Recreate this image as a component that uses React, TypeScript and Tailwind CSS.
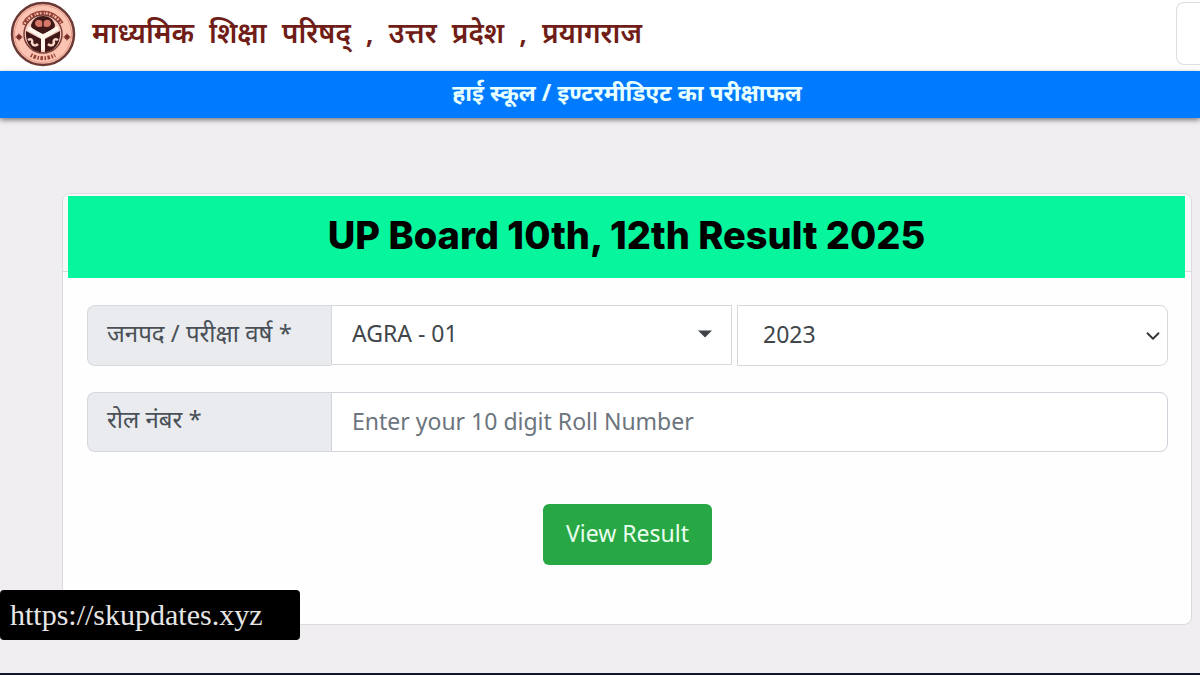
import { ChevronDown } from 'lucide-react'

const boardName = ['माध्यमिक', 'शिक्षा', 'परिषद्', ',', 'उत्तर', 'प्रदेश', ',', 'प्रयागराज']

export default function App() {
  return (
    <div className="relative flex min-h-screen flex-col overflow-hidden border-b-2 border-[#12162b] bg-[#f0eef1] font-['Noto_Sans',sans-serif] text-[#495057]">
      <Header />
      <main className="flex-1 pt-[75px] pr-2 pb-12 pl-[62px]">
        <ResultCard />
      </main>
      <a
        href="https://skupdates.xyz"
        className="absolute bottom-[33px] left-0 flex h-[50px] w-[300px] items-center rounded bg-black px-[10px] pb-[2px] font-['Liberation_Serif',serif] text-[30px] text-[#e6e6e6]"
      >
        https://skupdates.xyz
      </a>
    </div>
  )
}

function Header() {
  return (
    <header>
      <div className="flex h-[71px] items-center justify-between bg-[#fefffe] pb-1 pl-[10px]">
        <div className="flex items-center gap-4">
          <Emblem />
          <h1 className="flex gap-[15px] pb-1 text-[28px] font-semibold whitespace-nowrap text-[#701c17]">
            {boardName.map((word, i) => (
              <span key={i}>{word}</span>
            ))}
          </h1>
        </div>
        <button type="button" aria-label="Menu" className="h-[63px] w-6 rounded-l-lg border border-r-0 border-[#dcdfdd]" />
      </div>
      <div className="flex h-[47px] items-center justify-center bg-[#007bff] pb-1 pl-[54px] shadow-[0_2px_5px_rgba(0,0,0,0.5)]">
        <h2 className="text-[23px] font-bold text-[#e8ffff]">हाई स्कूल / इण्टरमीडिएट का परीक्षाफल</h2>
      </div>
    </header>
  )
}

function ResultCard() {
  return (
    <section className="rounded-lg border border-[#dcdadd] bg-[#fefefe]">
      <div className="h-[78px] rounded-t-lg border-b border-[#d5dbd9] bg-[#f5faf8] pt-[2px] pr-[6px] pl-[5px]">
        <h2 className="relative flex h-[82px] items-center justify-center bg-[#06f59d] pb-1 font-['Inter',sans-serif] text-[38px] font-extrabold text-black">
          UP Board 10th, 12th Result 2025
        </h2>
      </div>
      <form className="pt-[33px] pr-[23px] pb-[59px] pl-6" onSubmit={(e) => e.preventDefault()}>
        <div className="flex h-[61px]">
          <FieldLabel htmlFor="district">जनपद / परीक्षा वर्ष *</FieldLabel>
          <div className="relative w-[401px] shrink">
            <select id="district" className="h-[60px] w-full appearance-none border border-[#d5d9dd] bg-white px-5 pb-1 text-[23px] text-[#41464b]">
              <option>AGRA - 01</option>
            </select>
            <svg className="pointer-events-none absolute top-[25px] right-5" width="14" height="8" viewBox="0 0 14 8" fill="#3f4246">
              <path d="M0 0.5h14L7 7.5z" />
            </svg>
          </div>
          <div className="relative ml-[5px] flex-1">
            <select aria-label="परीक्षा वर्ष" className="h-full w-full appearance-none rounded-r-lg border border-[#d5d9dd] bg-white px-[25px] pb-[2px] text-[23px] text-[#41464b]">
              <option>2023</option>
            </select>
            <ChevronDown className="pointer-events-none absolute top-5 right-1 text-[#2f3337]" size={22} strokeWidth={2} />
          </div>
        </div>
        <div className="mt-[26px] flex h-[60px]">
          <FieldLabel htmlFor="roll">रोल नंबर *</FieldLabel>
          <input
            id="roll"
            type="text"
            placeholder="Enter your 10 digit Roll Number"
            className="min-w-0 flex-1 rounded-r-lg border border-[#ced4da] bg-white px-5 pb-[2px] text-[23px] placeholder:text-[#6c757d]"
          />
        </div>
        <div className="mt-[52px] flex justify-center">
          <button type="submit" className="h-[61px] w-[169px] rounded-md bg-[#28a745] pb-[2px] text-[23px] text-[#e9ffee]">
            View Result
          </button>
        </div>
      </form>
    </section>
  )
}

function FieldLabel({ htmlFor, children }: { htmlFor: string; children: string }) {
  return (
    <label
      htmlFor={htmlFor}
      className="flex w-[244px] shrink-0 items-center rounded-l-lg border border-r-0 border-[#d5d9dd] bg-[#e9ebee] pr-5 pb-[6px] pl-[19px] text-[24px] whitespace-nowrap"
    >
      {children}
    </label>
  )
}

function Emblem() {
  return (
    <svg width="66" height="66" viewBox="0 0 66 66" fill="none" role="img" aria-label="UP Board">
      <circle cx="33" cy="33" r="31" fill="#fbc4b2" stroke="#6b3a37" strokeWidth="2.5" />
      <circle cx="33" cy="33" r="28.500" stroke="#e79a89" strokeWidth="1" />
      {/* lettering band: top arc and shorter bottom arc */}
      <path d="M13 22A23 23 0 0 1 53 22" stroke="#a04a3f" strokeWidth="1.500" />
      <path d="M14 24A21 21 0 0 1 52 24" stroke="#963f35" strokeWidth="4" strokeDasharray="1.500 1.500 2.500 1 1 2" />
      <path d="M21 54A24 24 0 0 0 45 54" stroke="#963f35" strokeWidth="4" strokeDasharray="1.500 1.500 2.500 1.500" />
      <circle cx="33" cy="33" r="19" fill="#f9cdbf" stroke="#7c3d37" strokeWidth="1.500" />
      <path d="M21 24c2-6 6-9 12-9s10 3 12 9c0 2-1 4-3 5l-9 4-9-4c-2-1-3-3-3-5z" fill="#3f1817" />
      <path d="M25 22c1-4 5-4 8-1 3-3 7-3 8 1 0 4-4 5-8 3-4 2-8 1-8-3z" fill="#d5786a" />
      <path d="M33 17v13" stroke="#3f1817" strokeWidth="1.500" />
      <path d="M16 30l15 8v13c-9 0-16-9-15-21zM50 30l-15 8v13c9 0 16-9 15-21z" fill="#3f1817" />
      <path d="M18 27l15 9 15-9M33 35v14" stroke="#fff7ee" strokeWidth="4" />
      <path d="M18 39c3-2 5 0 4 3 1 3 4 3 6 1M48 39c-3-2-5 0-4 3-1 3-4 3-6 1" stroke="#f9d4c7" strokeWidth="2.500" />
      <circle cx="9" cy="36" r="2.500" fill="#7a302a" />
      <circle cx="57" cy="36" r="2.500" fill="#7a302a" />
      <path d="M5.500 36h7M9 32.500v7M53.500 36h7M57 32.500v7" stroke="#7a302a" strokeWidth="1" />
    </svg>
  )
}
